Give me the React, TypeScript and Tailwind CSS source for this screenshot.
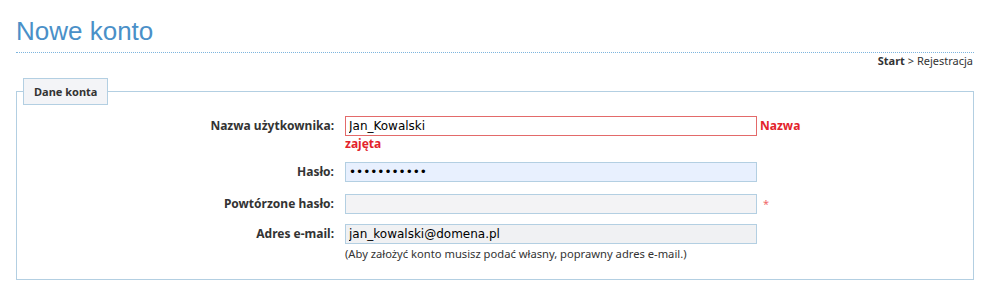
import React from "react";

const labelCls =
  "w-[328px] shrink-0 text-right pr-[11px] h-5 leading-5 text-[12px] font-bold text-[#333]";
const inputBase =
  "block w-[412px] h-5 border px-[3px] text-[12px] text-black outline-none";

export default function App() {
  return (
    <div className="bg-white w-[988px] h-[287px] pl-4 pr-[14px] pt-[16px]" style={{ fontFamily: '"Noto Sans", sans-serif' }}>
      <div className="border-b border-dotted border-[#7db5de] pb-[5px]">
        <h1 className="text-[26px] leading-[31px] text-[#4a90c8]" style={{ fontFamily: '"Liberation Sans", Arial, sans-serif' }}>
          Nowe konto
        </h1>
      </div>
      <div className="text-right text-[11px] leading-[15px] text-[#333] pr-px">
        <span className="font-bold">Start</span> &gt; Rejestracja
      </div>
      <fieldset className="mt-[10px] border border-[#b3cfe2] h-[202px]">
        <legend className="ml-[6px] border border-[#b3cfe2] bg-[#f3f4f7] px-[10px] h-[27px] leading-[25px] text-[11px] font-bold text-[#333]">
          Dane konta
        </legend>
        <div className="pt-[11px]">
          <div className="flex items-start">
            <div className={labelCls}>Nazwa użytkownika:</div>
            <div>
              <div className="flex items-center">
                <input
                  readOnly
                  value="Jan_Kowalski"
                  className={inputBase + " border-[#e36a6a] bg-white"}
                  style={{ fontFamily: '"DejaVu Sans", Verdana, sans-serif' }}
                />
                <span className="ml-[3px] text-[12px] font-bold text-[#e3232b]">Nazwa</span>
              </div>
              <div className="text-[12px] leading-[16px] font-bold text-[#e3232b]">zajęta</div>
            </div>
          </div>
          <div className="flex items-start mt-[10px]">
            <div className={labelCls}>Hasło:</div>
            <input
              readOnly
              type="password"
              value="xxxxxxxxxxx"
              className={inputBase + " border-[#b3cfe2] bg-[#e8f0fe]"}
              style={{ fontFamily: '"DejaVu Sans", Verdana, sans-serif' }}
            />
          </div>
          <div className="flex items-start mt-[12px]">
            <div className={labelCls}>Powtórzone hasło:</div>
            <input
              readOnly
              type="password"
              value=""
              className={inputBase + " border-[#b3cfe2] bg-[#f3f3f5]"}
              style={{ fontFamily: '"DejaVu Sans", Verdana, sans-serif' }}
            />
            <span className="ml-[6px] mt-[3px] text-[11px] leading-[14px] text-[#f06a6a]">*</span>
          </div>
          <div className="flex items-start mt-[10px]">
            <div className={labelCls}>Adres e-mail:</div>
            <div>
              <input
                readOnly
                value="jan_kowalski@domena.pl"
                className={inputBase + " border-[#b3cfe2] bg-[#f0f1f3]"}
                style={{ fontFamily: '"DejaVu Sans", Verdana, sans-serif' }}
              />
              <div className="mt-[2px] text-[11.2px] leading-[15px] text-[#333]">
                (Aby założyć konto musisz podać własny, poprawny adres e-mail.)
              </div>
            </div>
          </div>
        </div>
      </fieldset>
    </div>
  );
}
